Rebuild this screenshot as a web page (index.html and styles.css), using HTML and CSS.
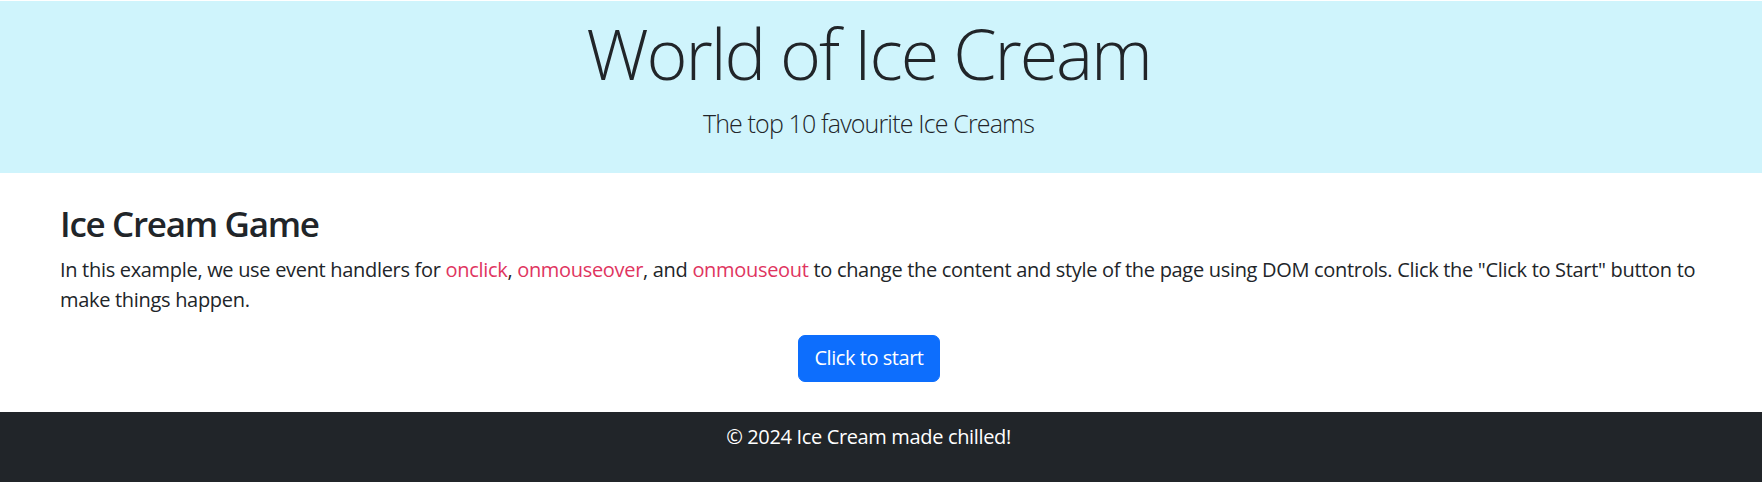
FILE: index.html
```html
<!DOCTYPE html>
<html lang="en">
<head>
<meta charset="utf-8">
<title>World of Ice Cream</title>
<link rel="stylesheet" href="styles.css">
</head>
<body>
<header class="hero">
  <h1 class="hero-title">World of Ice Cream</h1>
  <p class="hero-lead">The top 10 favourite Ice Creams</p>
</header>
<main class="content">
  <h3 class="game-title">Ice Cream Game</h3>
  <p class="intro">In this example, we use event handlers for <span class="code">onclick</span>, <span class="code">onmouseover</span>, and <span class="code">onmouseout</span> to change the content and style of the page using DOM controls. Click the "Click to Start" button to make things happen.</p>
  <div class="actions">
    <button class="btn" type="button">Click to start</button>
  </div>
</main>
<footer class="footer">
  <p class="footer-text">© 2024 Ice Cream made chilled!</p>
</footer>
</body>
</html>
```

FILE: styles.css
```css
* { box-sizing: border-box; }
html, body { margin: 0; padding: 0; }
body {
  font-family: "Open Sans", "Noto Sans", sans-serif;
  color: #212529;
  background: #fff;
  font-size: 20px;
  line-height: 1.5;
  padding-top: 1px;
}
.hero {
  background: #cff4fc;
  padding: 10px 35px 10px 10px;
  text-align: center;
}
.hero-title {
  margin: 0 0 10px;
  font-size: 70px;
  font-weight: 300;
  line-height: 84px;
  letter-spacing: -2.1px;
}
.hero-lead {
  margin: 0 0 20px;
  font-size: 25px;
  font-weight: 300;
  line-height: 37.5px;
  letter-spacing: -0.85px;
}
.content {
  padding: 30px 50px 0 60px;
}
.game-title {
  margin: 0 0 10px;
  font-size: 35px;
  font-weight: 600;
  line-height: 42px;
  letter-spacing: -1.3px;
}
.intro {
  margin: 0 0 20px;
  font-size: 20px;
  line-height: 30px;
  letter-spacing: -0.31px;
}
.code { color: #e0355f; }
.actions {
  display: flex;
  justify-content: center;
  padding: 0 34px 30px 0;
}
.btn {
  font-family: inherit;
  font-size: 20px;
  line-height: 30px;
  color: #fff;
  background: #0d6efd;
  border: 1px solid #0d6efd;
  border-radius: 7px;
  padding: 7px 15px;
  height: 47px;
  letter-spacing: -0.45px;
  cursor: pointer;
}
.footer {
  background: #212529;
  color: #fff;
  text-align: center;
  padding: 10px 35px 10px 10px;
}
.footer-text {
  margin: 0 0 20px;
  font-size: 20px;
  line-height: 30px;
  letter-spacing: -0.35px;
}
```
